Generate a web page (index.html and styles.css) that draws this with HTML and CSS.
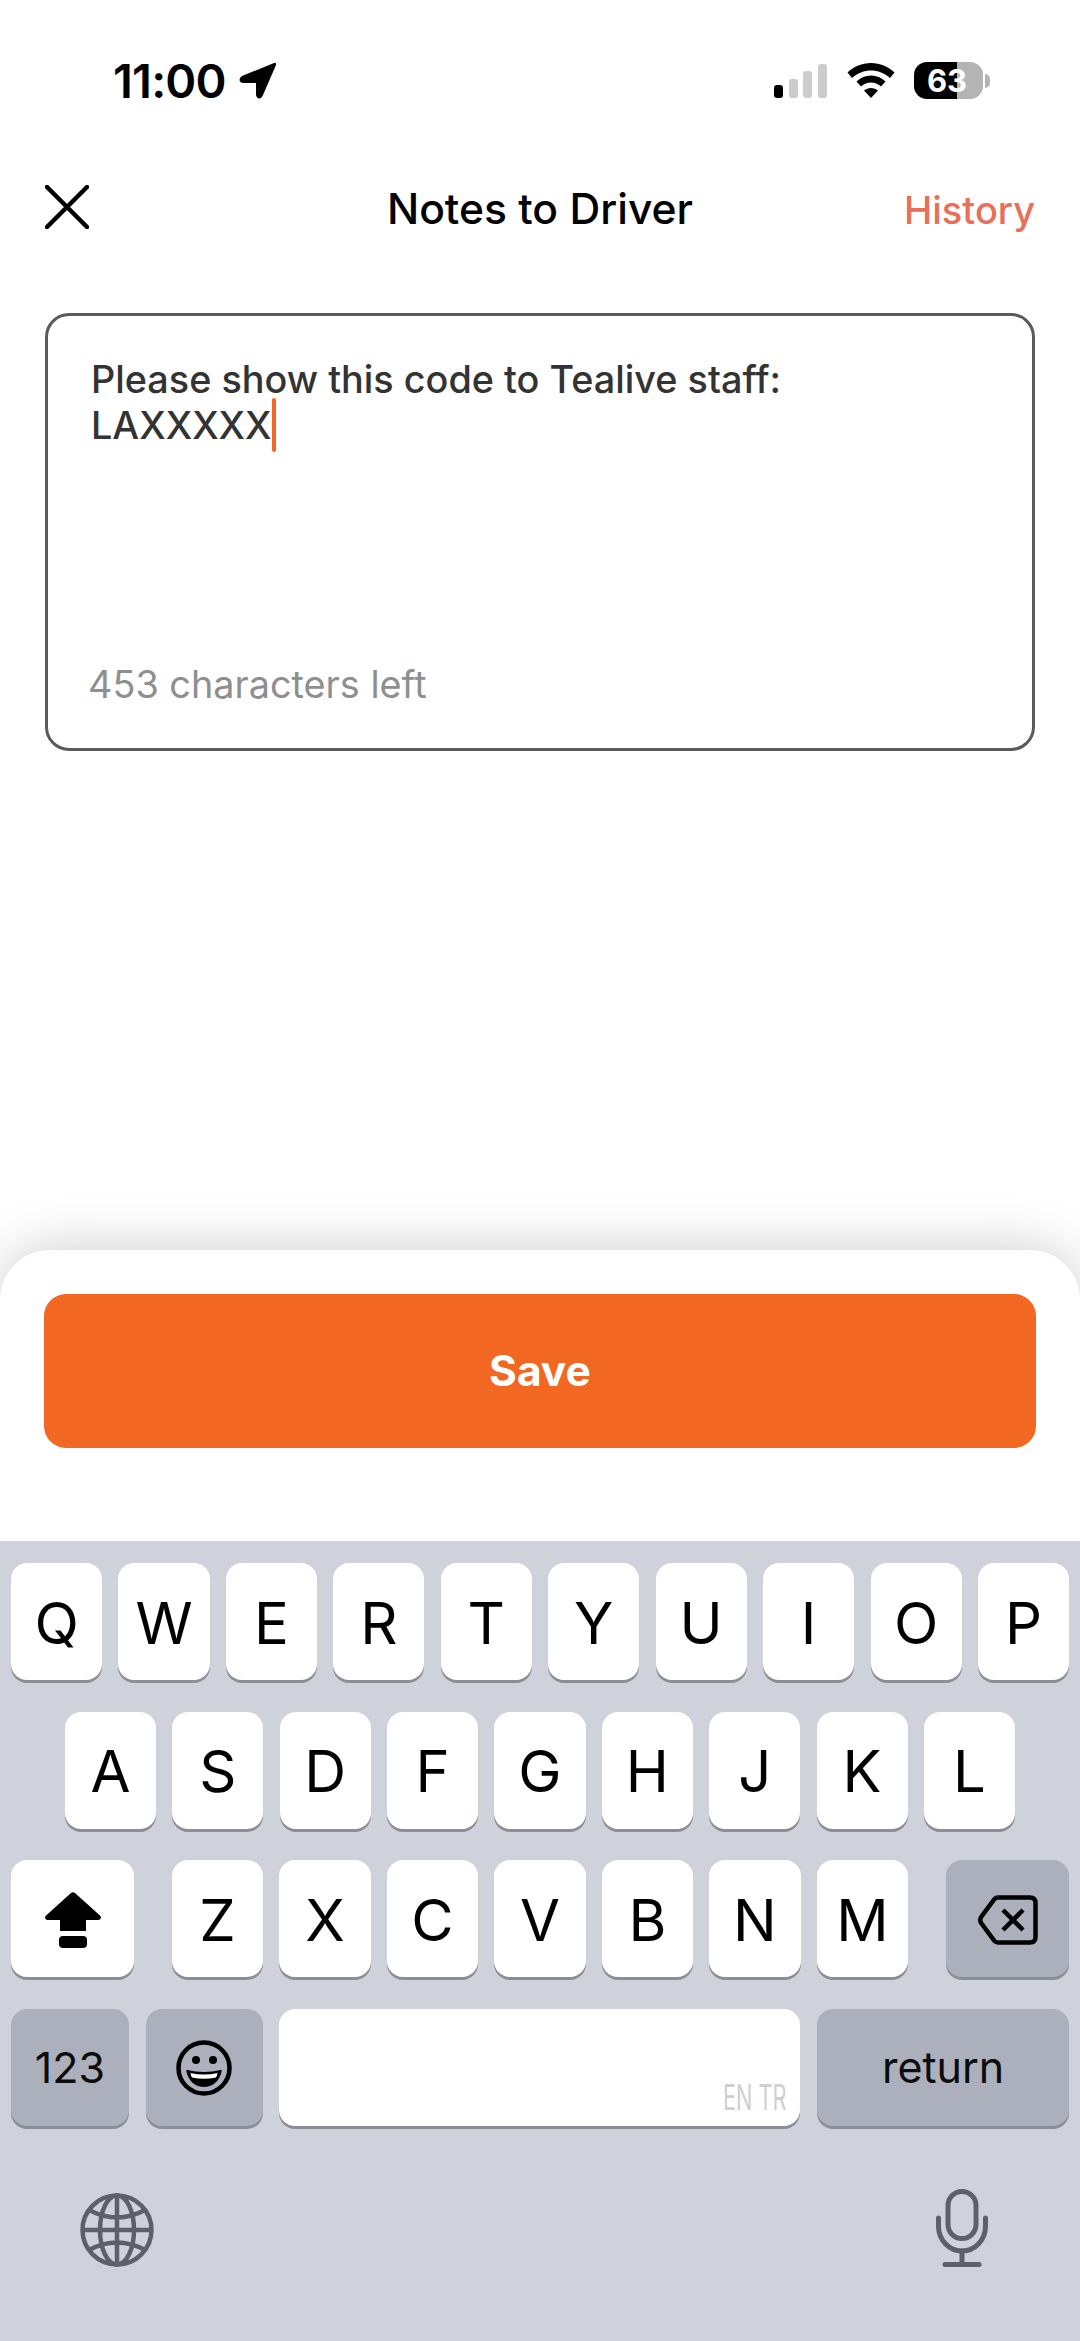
FILE: index.html
```html
<!DOCTYPE html>
<html>
<head lang="en">
    <meta charset="UTF-8">
    <title>Notes to Driver</title>
    <link rel="stylesheet" href="styles.css">
</head>
<body>
<div id="page">
    <div class="status">
        <div class="status-left">
            <span class="time">11:00</span>
            <svg class="loc" width="38" height="37" viewBox="0 0 38 37"><path d="M35 1 L3 14 Q-1 17 1.500 20 Q2 21 5 21 L17 21 L17 33 Q18 37 21 36.500 Q23 36 24 33 L37 3 Q37.500 0 35 1 Z" fill="#000"/></svg>
        </div>
        <div class="status-right">
            <div class="signal">
                <i class="bar bar1"></i><i class="bar bar2"></i><i class="bar bar3"></i><i class="bar bar4"></i>
            </div>
            <svg class="wifi" width="48" height="35" viewBox="0 0 48 35"><path d="M24 0 C33 0 41 3.500 47.500 9.500 L43 15 C37.500 10 31 7.500 24 7.500 C17 7.500 10.500 10 5 15 L.5 9.500 C7 3.500 15 0 24 0 Z M24 12.500 C29.500 12.500 34.500 14.500 38.500 18.500 L34 23.500 C31 21 27.500 19.500 24 19.500 C20.500 19.500 17 21 14 23.500 L9.500 18.500 C13.500 14.500 18.500 12.500 24 12.500 Z M24 25 C26.500 25 29 26 31 27.500 L24 35 L17 27.500 C19 26 21.500 25 24 25 Z" fill="#000"/></svg>
            <div class="battery"><span>63</span></div>
            <i class="battery-cap"></i>
        </div>
    </div>

    <div class="header">
        <svg class="close" width="44" height="44" viewBox="0 0 44 44"><path d="M2 2 L42 42 M42 2 L2 42" stroke="#000" stroke-width="4.500" stroke-linecap="round"/></svg>
        <div class="title">Notes to Driver</div>
        <div class="history">History</div>
    </div>

    <div class="card">
        <div class="note">Please show this code to Tealive staff:<br>LAXXXXX<i class="caret"></i></div>
        <div class="count">453 characters left</div>
    </div>

    <div class="spacer"></div>

    <div class="sheet">
        <div class="save">Save</div>
    </div>

    <div class="keyboard">
        <div class="row">
            <div class="key">Q</div><div class="key">W</div><div class="key">E</div><div class="key">R</div><div class="key">T</div>
            <div class="key">Y</div><div class="key">U</div><div class="key">I</div><div class="key">O</div><div class="key">P</div>
        </div>
        <div class="row row2">
            <div class="key">A</div><div class="key">S</div><div class="key">D</div><div class="key">F</div><div class="key">G</div>
            <div class="key">H</div><div class="key">J</div><div class="key">K</div><div class="key">L</div>
        </div>
        <div class="row row3">
            <div class="key wide">
                <svg width="56" height="56" viewBox="0 0 56 56"><path d="M26 1 Q28 -.5 30 1 L55.500 24 Q57 27.500 53.500 28 L41 28 L41 39 L15 39 L15 28 L2.500 28 Q-1 27.500 .5 24 Z" fill="#000"/><rect x="14" y="44" width="28" height="12" rx="4" fill="#000"/></svg>
            </div>
            <div class="letters">
                <div class="key">Z</div><div class="key">X</div><div class="key">C</div><div class="key">V</div>
                <div class="key">B</div><div class="key">N</div><div class="key">M</div>
            </div>
            <div class="key wide dark">
                <svg width="60" height="50" viewBox="0 0 60 50"><path d="M20 2.500 L52 2.500 Q57.500 2.500 57.500 8 L57.500 42 Q57.500 47.500 52 47.500 L20 47.500 Q18 47.500 16.500 46 L3.500 28.500 Q1 25 3.500 21.500 L16.500 4 Q18 2.500 20 2.500 Z" fill="none" stroke="#000" stroke-width="4.500"/><path d="M25 15 L45 35 M45 15 L25 35" stroke="#000" stroke-width="4.500"/></svg>
            </div>
        </div>
        <div class="row row4">
            <div class="key dark small k123">123</div>
            <div class="key dark k-emoji">
                <svg width="56" height="56" viewBox="0 0 56 56"><circle cx="28" cy="28" r="25.500" fill="none" stroke="#000" stroke-width="4.500"/><circle cx="20" cy="20" r="4" fill="#000"/><circle cx="37" cy="20" r="4" fill="#000"/><path d="M11 30 Q28 34 45 30 Q46 29 45.500 32 C43 42 36 47 28 47 C20 47 13 42 10.500 32 Q10 29 11 30 Z" fill="#000"/><path d="M14.500 33 Q28 36 41.500 33 Q41 36 40 37.500 Q28 40 16 37.500 Q15 36 14.500 33 Z" fill="#fff"/></svg>
            </div>
            <div class="key space"><span class="lang">EN TR</span></div>
            <div class="key dark small k-return">return</div>
        </div>
        <div class="extras">
            <svg width="74" height="74" viewBox="0 0 74 74" fill="none" stroke="#5b6069" stroke-width="4.500">
                <circle cx="37" cy="37" r="34.500"/>
                <ellipse cx="37" cy="37" rx="17" ry="34.500"/>
                <path d="M37 2.500 L37 71.500 M2.500 37 L71.500 37 M9 17 Q37 32 65 17 M9 57 Q37 42 65 57"/>
            </svg>
            <svg width="52" height="78" viewBox="0 0 52 78" fill="none" stroke="#5b6069" stroke-width="5">
                <rect x="12" y="2.500" width="28" height="47" rx="14"/>
                <path d="M2.500 29 L2.500 37 C2.500 51 13 62 26 62 C39 62 49.500 51 49.500 37 L49.500 29" stroke-linecap="round"/>
                <path d="M26 62 L26 75 M9 75.500 L43 75.500" stroke-linecap="round"/>
            </svg>
        </div>
    </div>
</div>
</body>
</html>
```

FILE: styles.css
```css
*{
    margin: 0;
    padding: 0;
    box-sizing: border-box;
}
body{
    background: white;
    font-family: Inter, "Liberation Sans", sans-serif;
}
#page{
    width: 1080px;
    height: 2341px;
    display: flex;
    flex-direction: column;
    overflow: hidden;
}
.status{
    height: 177px;
    padding: 62px 90px 0 113px;
    display: flex;
    justify-content: space-between;
    align-items: flex-start;
}
.status-left{
    display: flex;
    align-items: center;
    height: 37px;
    gap: 13px;
}
.time{
    font-size: 47px;
    font-weight: 600;
    line-height: 37px;
    letter-spacing: -0.800px;
    color: black;
}
.status-right{
    display: flex;
    align-items: center;
    height: 37px;
}
.signal{
    display: flex;
    align-items: flex-end;
    gap: 5.600px;
    height: 34px;
    margin-right: 20px;
}
.bar{
    display: block;
    width: 9px;
    background: #cccccc;
    border-radius: 3px;
}
.bar1{
    height: 13px;
    background: black;
}
.bar2{
    height: 19px;
}
.bar3{
    height: 27px;
}
.bar4{
    height: 34px;
}
.wifi{
    margin-right: 19px;
}
.battery{
    width: 69px;
    height: 37px;
    border-radius: 13px;
    background: linear-gradient(to right, black 43px, #b4b4b4 43px);
    display: flex;
    align-items: center;
    justify-content: center;
}
.battery span{
    color: white;
    font-size: 31px;
    font-weight: 700;
    line-height: 37px;
    margin-right: 3px;
}
.battery-cap{
    display: block;
    width: 5px;
    height: 14px;
    margin-left: 2px;
    background: #b4b4b4;
    border-radius: 0 7px 7px 0;
}
.header{
    height: 60px;
    padding: 0 45px;
    display: grid;
    grid-template-columns: 1fr auto 1fr;
    align-items: center;
}
.title{
    font-size: 42.600px;
    font-weight: 500;
    color: black;
    padding-top: 2px;
}
.history{
    font-size: 38px;
    font-weight: 500;
    color: #e8705a;
    text-align: right;
    padding-top: 5px;
}
.card{
    width: 990px;
    height: 438px;
    margin: 76px 45px 0;
    border: 3px solid #5a5a5a;
    border-radius: 24px;
    padding: 40px 43px 41px;
    display: flex;
    flex-direction: column;
    justify-content: space-between;
}
.note{
    font-size: 37.800px;
    font-weight: 500;
    line-height: 46px;
    color: #333333;
}
.caret{
    position: absolute;
    width: 4px;
    height: 54px;
    margin-top: -4px;
    background: #f26722;
    border-radius: 2px;
}
.count{
    margin-left: -3px;
    font-size: 37.800px;
    line-height: 46px;
    color: #8f8f8f;
}
.spacer{
    flex: 1;
}
.sheet{
    height: 291px;
    padding: 44px 44px 0;
    background: white;
    border-radius: 50px 50px 0 0;
    box-shadow: 0 -4px 50px rgba(0,0,0,0.18);
}
.save{
    height: 154px;
    padding-bottom: 2px;
    background: #f26722;
    border-radius: 22px;
    color: white;
    font-size: 42.500px;
    font-weight: 700;
    display: flex;
    align-items: center;
    justify-content: center;
}
.keyboard{
    height: 800px;
    padding: 22px 11px 0;
    background: #cfd2da;
    display: flex;
    flex-direction: column;
    gap: 31.500px;
    position: relative;
}
.row{
    display: flex;
    gap: 16.300px;
}
.row2{
    padding: 0 54px;
}
.row3{
    gap: 38px;
}
.letters{
    flex: 1;
    display: flex;
    gap: 16.300px;
}
.key{
    flex: 1;
    height: 117px;
    padding-top: 2px;
    background: white;
    border-radius: 16px;
    box-shadow: 0 3px 0 #8b8e96;
    display: flex;
    align-items: center;
    justify-content: center;
    font-size: 58px;
    color: black;
}
.key.wide{
    flex: none;
    width: 123px;
}
.key.dark{
    background: #abb0bc;
}
.key.small{
    padding-top: 0;
    font-size: 43px;
    color: #0c0c0c;
}
.row4{
    gap: 16.700px;
}
.row4 .key{
    flex: none;
}
.k123{
    width: 118px;
}
.k-emoji{
    width: 117px;
}
.key.space{
    width: 521px;
    padding: 0 14px 14px 0;
    align-items: flex-end;
    justify-content: flex-end;
}
.k-return{
    width: 252px;
}
.lang{
    font-size: 35px;
    line-height: 30px;
    color: #cfcfcf;
    transform: scaleX(0.62);
    transform-origin: right bottom;
    white-space: nowrap;
}
.extras{
    margin-top: 32px;
    padding: 0 81px 0 69px;
    display: flex;
    justify-content: space-between;
    align-items: flex-end;
}
```
